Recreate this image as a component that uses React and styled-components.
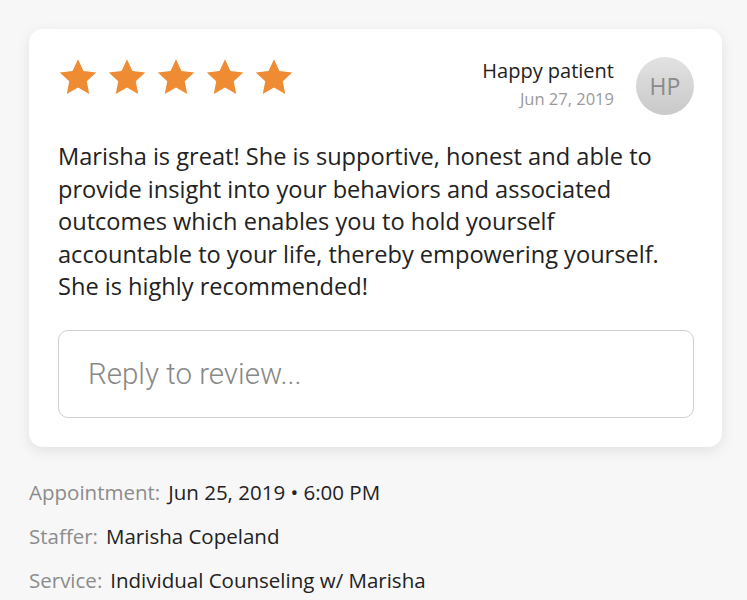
import styled, { createGlobalStyle } from "styled-components";

const Global = createGlobalStyle`
  html, body {
    margin: 0;
    padding: 0;
    background: #f7f7f7;
  }
  body {
    font-family: "Open Sans", "Liberation Sans", sans-serif;
  }
`;

const Page = styled.div`
  padding: 29px 25px 0 29px;
`;

const Card = styled.div`
  background: #fff;
  border-radius: 14px;
  box-shadow: 0 4px 14px rgba(0, 0, 0, 0.09);
  padding: 28px 28px 29px 29px;
`;

const Header = styled.div`
  display: flex;
  justify-content: space-between;
  align-items: flex-start;
`;

const Stars = styled.div`
  display: flex;
  gap: 9px;
  padding-top: 1px;
`;

const Author = styled.div`
  display: flex;
  align-items: flex-start;
  gap: 22px;
`;

const AuthorText = styled.div`
  display: flex;
  flex-direction: column;
  align-items: flex-end;
  padding-top: 1px;
`;

const Name = styled.div`
  font-size: 20px;
  color: #222;
  line-height: 26px;
`;

const DateLine = styled.div`
  font-size: 16.5px;
  color: #9a9a9a;
  margin-top: 3px;
`;

const Avatar = styled.div`
  width: 58px;
  height: 58px;
  border-radius: 50%;
  background: linear-gradient(180deg, #e2e2e2 0%, #c9c9c9 100%);
  display: flex;
  align-items: center;
  justify-content: center;
  color: #8a8a8a;
  font-size: 23px;
`;

const Body = styled.p`
  margin: 25px 0 0;
  padding-right: 10px;
  font-size: 23.6px;
  line-height: 32.5px;
  color: #222;
`;

const Reply = styled.input`
  box-sizing: border-box;
  display: block;
  width: 100%;
  height: 88px;
  margin-top: 27px;
  border: 1.5px solid #d0d0d0;
  border-radius: 10px;
  padding: 0 29px;
  font-family: Roboto, sans-serif;
  font-weight: 300;
  font-size: 29.5px;
  color: #333;
  outline: none;
  &::placeholder {
    color: #888;
  }
`;

const Details = styled.div`
  padding-top: 32px;
  display: flex;
  flex-direction: column;
  gap: 18px;
`;

const Row = styled.div`
  font-size: 20.5px;
  line-height: 26px;
  color: #222;
`;

const Label = styled.span`
  color: #8c8c8c;
  margin-right: 8px;
`;

const Star = () => (
  <svg width="40" height="38" viewBox="0 0 24 23">
    <path
      d="M12 0.8l3.3 7.1 7.7.9-5.7 5.3 1.5 7.7L12 17.9l-6.8 3.9 1.5-7.7L1 8.8l7.7-.9z"
      fill="#ef8b33"
    />
  </svg>
);

export default function App() {
  return (
    <Page>
      <Global />
      <Card>
        <Header>
          <Stars>
            {[0, 1, 2, 3, 4].map((i) => (
              <Star key={i} />
            ))}
          </Stars>
          <Author>
            <AuthorText>
              <Name>Happy patient</Name>
              <DateLine>Jun 27, 2019</DateLine>
            </AuthorText>
            <Avatar>HP</Avatar>
          </Author>
        </Header>
        <Body>
          Marisha is great! She is supportive, honest and able to provide
          insight into your behaviors and associated outcomes which enables you
          to hold yourself accountable to your life, thereby empowering
          yourself. She is highly recommended!
        </Body>
        <Reply placeholder="Reply to review..." />
      </Card>
      <Details>
        <Row>
          <Label>Appointment:</Label>Jun 25, 2019 • 6:00 PM
        </Row>
        <Row>
          <Label>Staffer:</Label>Marisha Copeland
        </Row>
        <Row>
          <Label>Service:</Label>Individual Counseling w/ Marisha
        </Row>
      </Details>
    </Page>
  );
}
